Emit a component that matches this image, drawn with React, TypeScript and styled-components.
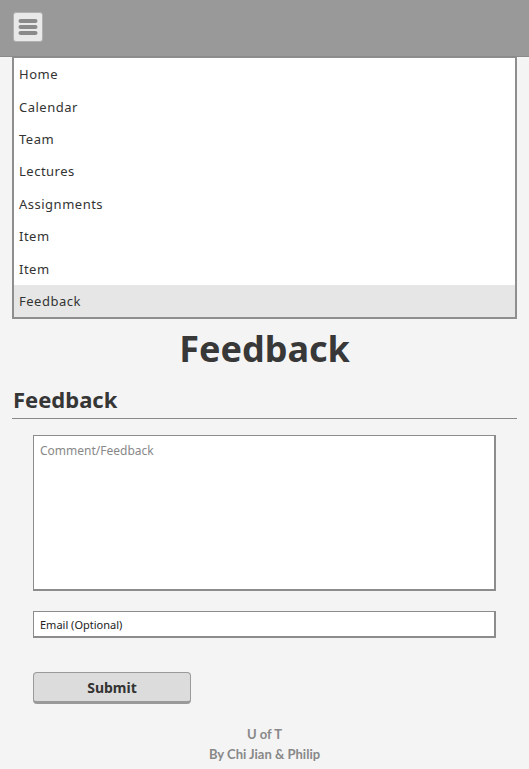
import React from "react";
import styled, { createGlobalStyle } from "styled-components";

const Global = createGlobalStyle`
  html, body { margin: 0; padding: 0; background: #f4f4f4; }
  body { font-family: "Noto Sans", "DejaVu Sans", sans-serif; color: #333; }
  * { box-sizing: border-box; }
`;

const Page = styled.div`
  display: flex;
  flex-direction: column;
`;

const Header = styled.header`
  height: 57px;
  background: #999;
  border-bottom: 1px solid #8a8a8a;
  display: flex;
  align-items: flex-start;
  padding: 12px 13px;
`;

const MenuButton = styled.button`
  width: 30px;
  height: 30px;
  padding: 0;
  background: #e9e9e9;
  border: 1px solid #b0b0b0;
  border-radius: 3px;
  display: flex;
  align-items: center;
  justify-content: center;
`;

const Nav = styled.nav`
  margin: 0 12px;
  background: #fff;
  border: 2px solid #8e8e8e;
  border-top-width: 1px;
  display: flex;
  flex-direction: column;
`;

const NavItem = styled.div<{ $active?: boolean }>`
  height: 32.4px;
  display: flex;
  align-items: center;
  padding-left: 5px;
  font-size: 13px;
  letter-spacing: 0.5px;
  color: #333;
  background: ${(p) => (p.$active ? "#e6e6e6" : "#fff")};
`;

const Title = styled.h1`
  margin: 10px 0 0;
  text-align: center;
  font-size: 36px;
  font-weight: 700;
  line-height: 40px;
  color: #383838;
`;

const Section = styled.section`
  margin: 0 12px;
`;

const SubTitle = styled.h2`
  margin: 15px 0 0;
  padding-left: 1px;
  font-size: 22px;
  font-weight: 700;
  line-height: 30px;
  color: #363636;
  padding-bottom: 4px;
  border-bottom: 1px solid #8a8a8a;
`;

const Form = styled.form`
  padding: 16px 21px 0;
  display: flex;
  flex-direction: column;
  align-items: flex-start;
`;

const TextArea = styled.textarea`
  width: 100%;
  height: 156px;
  resize: none;
  border: 2px solid #8c8c8c;
  border-top-width: 1px;
  border-left-width: 1px;
  background: #fff;
  padding: 6px 6px;
  font-family: inherit;
  font-size: 12px;
  &::placeholder { color: #888; }
`;

const Input = styled.input`
  width: 100%;
  height: 27px;
  margin-top: 20px;
  border: 2px solid #8c8c8c;
  border-top-width: 1px;
  border-left-width: 1px;
  background: #fff;
  padding: 0 6px;
  font-family: inherit;
  font-size: 11px;
  &::placeholder { color: #222; }
`;

const SubmitButton = styled.button`
  margin-top: 34px;
  width: 158px;
  height: 32px;
  background: #dcdcdc;
  border: 1px solid #9a9a9a;
  border-bottom: 3px solid #999;
  border-radius: 4px;
  font-family: inherit;
  font-size: 14px;
  font-weight: 700;
  color: #333;
`;

const Footer = styled.footer`
  margin-top: 20px;
  text-align: center;
  font-family: Lato, "Noto Sans", sans-serif;
  font-size: 13px;
  font-weight: 700;
  color: #888;
  line-height: 20px;
`;

const items = ["Home", "Calendar", "Team", "Lectures", "Assignments", "Item", "Item", "Feedback"];

export default function App() {
  return (
    <Page>
      <Global />
      <Header>
        <MenuButton aria-label="menu">
          <svg width="20" height="20" viewBox="0 0 20 20">
            <rect x="0.5" y="2" width="19" height="4" rx="2" fill="#8a8a8a" />
            <rect x="0.5" y="8" width="19" height="4" rx="2" fill="#8a8a8a" />
            <rect x="0.5" y="14" width="19" height="4" rx="2" fill="#8a8a8a" />
          </svg>
        </MenuButton>
      </Header>
      <Nav>
        {items.map((t, i) => (
          <NavItem key={i} $active={i === items.length - 1}>
            {t}
          </NavItem>
        ))}
      </Nav>
      <Title>Feedback</Title>
      <Section>
        <SubTitle>Feedback</SubTitle>
        <Form onSubmit={(e) => e.preventDefault()}>
          <TextArea placeholder="Comment/Feedback" />
          <Input placeholder="Email (Optional)" />
          <SubmitButton type="submit">Submit</SubmitButton>
        </Form>
      </Section>
      <Footer>
        <div>U of T</div>
        <div>By Chi Jian &amp; Philip</div>
      </Footer>
    </Page>
  );
}
